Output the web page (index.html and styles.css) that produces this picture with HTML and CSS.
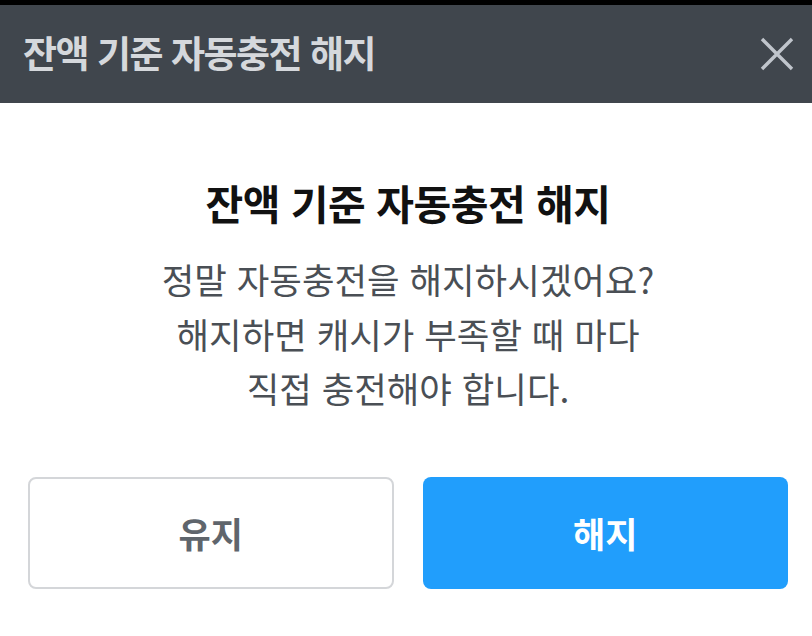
FILE: index.html
```html
<!DOCTYPE html>
<html lang="ko">
<head>
<meta charset="utf-8">
<link rel="stylesheet" href="styles.css">
</head>
<body>
<div class="dialog">
  <header class="bar">
    <h1 class="bar-title">잔액 기준 자동충전 해지</h1>
    <button class="close" aria-label="닫기">
      <svg width="34" height="34" viewBox="0 0 34 34"><path d="M2 2 L32 32 M32 2 L2 32" stroke="#c0c5cc" stroke-width="3.4" fill="none"/></svg>
    </button>
  </header>
  <main class="content">
    <h2 class="title">잔액 기준 자동충전 해지</h2>
    <p class="message">정말 자동충전을 해지하시겠어요?<br>해지하면 캐시가 부족할 때 마다<br>직접 충전해야 합니다.</p>
    <div class="actions">
      <button class="btn btn-keep">유지</button>
      <button class="btn btn-cancel">해지</button>
    </div>
  </main>
</div>
</body>
</html>
```
FILE: styles.css
```css
html, body {
  margin: 0;
  padding: 0;
  background: #ffffff;
}
body {
  font-family: "Noto Sans CJK KR", "Noto Sans", sans-serif;
  border-top: 5px solid #000;
}
.dialog {
  width: 812px;
}
.bar {
  height: 98px;
  background: #40464d;
  display: flex;
  align-items: center;
  justify-content: space-between;
  padding: 0 18px 0 23px;
  box-sizing: border-box;
}
.bar-title {
  margin: -4px 0 0;
  font-size: 37px;
  font-weight: 700;
  color: #d5d8dc;
  letter-spacing: -1.5px;
}
.close {
  background: none;
  border: 0;
  padding: 0;
  width: 34px;
  height: 34px;
  display: flex;
}
.content {
  padding: 69px 24px 0 28px;
  display: flex;
  flex-direction: column;
  align-items: center;
}
.title {
  margin: 0;
  font-size: 41px;
  font-weight: 700;
  color: #111111;
  line-height: 60px;
  letter-spacing: -0.5px;
}
.message {
  margin: 20px 0 0;
  font-size: 35.4px;
  font-weight: 400;
  color: #4a4f55;
  line-height: 54.5px;
  text-align: center;
}
.actions {
  margin-top: 61px;
  width: 100%;
  display: grid;
  grid-template-columns: 1fr 1fr;
  gap: 29px;
}
.btn {
  height: 112px;
  border-radius: 8px;
  font-family: inherit;
  font-size: 35px;
  font-weight: 700;
  cursor: pointer;
}
.btn-keep {
  background: #fff;
  border: 2px solid #d4d6d9;
  color: #5f656c;
}
.btn-cancel {
  background: #219efc;
  border: 0;
  color: #fff;
}
```
